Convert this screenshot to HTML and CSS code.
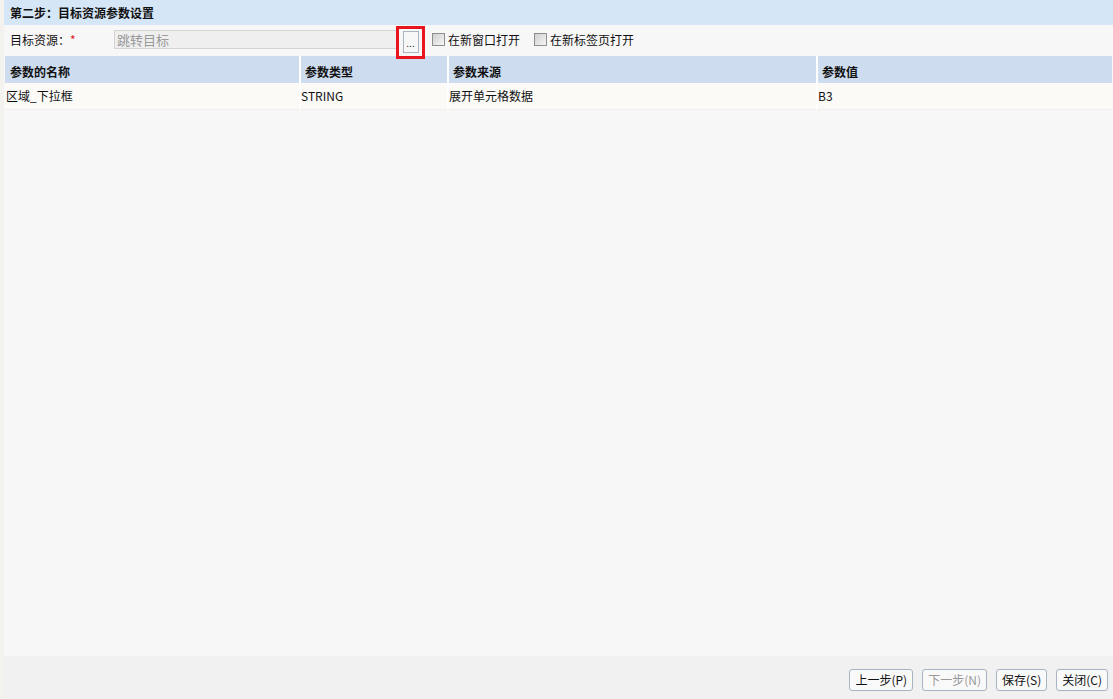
FILE: index.html
```html
<!DOCTYPE html>
<html>
<head>
<meta charset="utf-8">
<link rel="stylesheet" href="styles.css">
</head>
<body>
<div class="page">
  <div class="main">
    <div class="title">第二步：目标资源参数设置</div>
    <div class="form-row">
      <div class="label">目标资源：<span class="req">*</span></div>
      <div class="input">跳转目标</div>
      <div class="browse-wrap"><div class="browse">...</div></div>
      <label class="chk"><span class="box"></span>在新窗口打开</label>
      <label class="chk chk2"><span class="box"></span>在新标签页打开</label>
    </div>
    <div class="grid">
      <div class="th c1">参数的名称</div>
      <div class="th c2">参数类型</div>
      <div class="th c3">参数来源</div>
      <div class="th c4">参数值</div>
      <div class="td c1">区域_下拉框</div>
      <div class="td c2">STRING</div>
      <div class="td c3">展开单元格数据</div>
      <div class="td c4">B3</div>
    </div>
  </div>
  <div class="footer">
    <button class="btn">上一步(P)</button>
    <button class="btn disabled">下一步(N)</button>
    <button class="btn">保存(S)</button>
    <button class="btn">关闭(C)</button>
  </div>
</div>
</body>
</html>
```
FILE: styles.css
```css
html, body {
  margin: 0;
  padding: 0;
  width: 1113px;
  height: 699px;
  overflow: hidden;
  background: #f4f2ef;
  font-family: "Noto Sans CJK SC", "Noto Sans", sans-serif;
  font-size: 12px;
  color: #111;
}
.page {
  margin-left: 4px;
  height: 699px;
  display: flex;
  flex-direction: column;
  background: #f7f7f7;
}
.main {
  flex: 1;
  display: flex;
  flex-direction: column;
}
.title {
  height: 25px;
  line-height: 25px;
  background: #d5e6f7;
  padding-left: 6px;
  font-weight: bold;
  font-size: 12px;
}
.form-row {
  height: 31px;
  display: flex;
  align-items: center;
  position: relative;
}
.label {
  width: 104px;
  padding-left: 6px;
  font-size: 12px;
  margin-bottom: 2px;
}
.req { color: #e02020; }
.input {
  width: 280px;
  height: 17px;
  line-height: 17px;
  border: 1px solid #d4d4d4;
  background: #efefef;
  color: #999;
  padding-left: 2px;
  font-size: 13px;
  margin-bottom: 3px;
}
.browse-wrap {
  margin-left: -2px;
  width: 23px;
  height: 27px;
  border: 3px solid #e8141e;
  display: flex;
  align-items: center;
  justify-content: center;
  margin-top: 3px;
}
.browse {
  width: 14px;
  height: 20px;
  border: 1px solid #a9b4c0;
  background: #f7f7f7;
  font-size: 10px;
  text-align: center;
  line-height: 22px;
  color: #333;
}
.chk {
  display: flex;
  align-items: center;
  margin-left: 7px;
  font-size: 12px;
  margin-bottom: 3px;
}
.chk2 { margin-left: 14px; }
.box {
  width: 11px;
  height: 11px;
  border: 1px solid #8f8f8f;
  background: linear-gradient(135deg, #d0d0d0, #f6f6f6);
  margin-right: 3px;
}
.grid {
  margin-left: 1px;
  margin-right: 1px;
  display: grid;
  grid-template-columns: 294px 148px 369px 1fr;
  column-gap: 0;
}
.th {
  height: 27px;
  line-height: 31px;
  background: #cddcef;
  font-weight: bold;
  padding-left: 4px;
  border-left: 2px solid #fff;
}
.th.c1 { border-left: none; padding-left: 5px; }
.td {
  height: 26px;
  line-height: 26px;
  background: #fbfaf7;
  border-left: 2px solid #fff;
  border-bottom: 1px solid #f0efec;
}
.td.c1 { border-left: none; padding-left: 1px; }
.footer {
  height: 43px;
  background: #f1f1f1;
  display: flex;
  align-items: center;
  justify-content: flex-end;
  padding-right: 5px;
  gap: 9px;
  padding-top: 4px;
  box-sizing: border-box;
}
.btn {
  height: 22px;
  padding: 0 5px;
  border: 1px solid #a8b4c2;
  border-radius: 3px;
  background: #f9f9f9;
  font-family: "Noto Sans CJK SC", "Noto Sans", sans-serif;
  font-size: 12px;
  color: #111;
  line-height: 18px;
}
.btn.disabled { color: #999; }
```
